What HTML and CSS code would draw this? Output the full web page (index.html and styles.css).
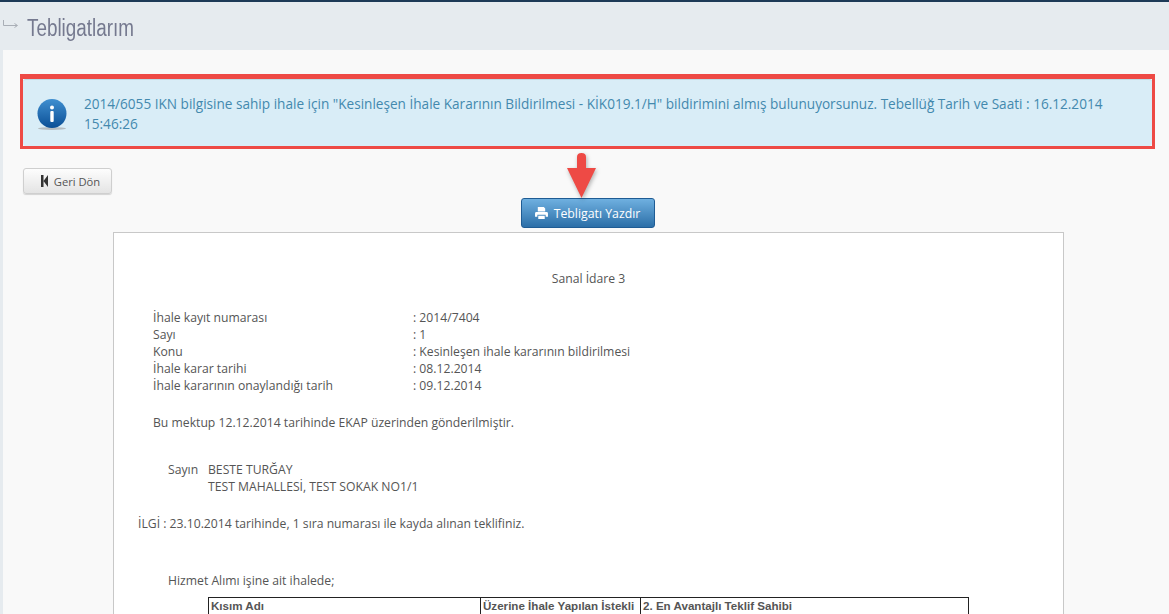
FILE: index.html
```html
<!DOCTYPE html>
<html lang="tr">
<head>
    <meta charset="UTF-8">
    <meta name="viewport" content="width=device-width, initial-scale=1.0">
    <title>Tebligatlarım</title>
    <link rel="stylesheet" href="styles.css">
</head>
<body>

<div class="page-header">
    <svg class="header-icon" width="16" height="9" viewBox="0 0 16 9">
        <path d="M0.5 0V5.5H14M11.5 3.5L14.5 5.5L11.5 7.5" fill="none" stroke="#a9aeb6" stroke-width="1"/>
    </svg>
    <h1>Tebligatlarım</h1>
</div>

<div class="content">
    <div class="alert-info">
        <svg class="alert-icon" width="32" height="32" viewBox="0 0 32 32">
            <defs>
                <linearGradient id="infoGrad" x1="0" y1="0" x2="0" y2="1">
                    <stop offset="0" stop-color="#3f8fd0"/>
                    <stop offset="1" stop-color="#0b4f96"/>
                </linearGradient>
            </defs>
            <ellipse cx="15" cy="29.5" rx="14" ry="1.5" fill="#b5bcc0"/>
            <circle cx="15" cy="14.5" r="14.5" fill="url(#infoGrad)"/>
            <circle cx="15" cy="8.5" r="2" fill="#fff"/>
            <rect x="13.3" y="12" width="3.4" height="11" rx="1" fill="#fff"/>
        </svg>
        <p>2014/6055 IKN bilgisine sahip ihale için "Kesinleşen İhale Kararının Bildirilmesi - KİK019.1/H" bildirimini almış bulunuyorsunuz. Tebellüğ Tarih ve Saati : 16.12.2014 15:46:26</p>
        <!-- red highlight around the alert -->
        <div class="highlight-box"></div>
    </div>

    <div class="back-row">
        <button class="btn btn-back">
            <svg width="7" height="12" viewBox="0 0 7 12"><path d="M0 0H2.5V12H0ZM2.5 6L7 0V12Z" fill="#333"/></svg>
            Geri Dön
        </button>
    </div>

    <div class="print-row">
        <button class="btn btn-print">
            <svg width="13" height="12" viewBox="0 0 14 13"><path d="M3 0H9.5L11 1.5V5H3ZM1.5 5.5H12.5Q14 5.5 14 7V10.5H11.5V8.5H2.5V10.5H0V7Q0 5.5 1.5 5.5ZM3.5 9.5H10.5V13H3.5Z" fill="#fff"/></svg>
            Tebligatı Yazdır
        </button>
        <!-- red arrow pointing at the print button -->
        <svg class="arrow" width="36" height="50" viewBox="0 0 36 50">
            <path d="M13 6Q13 2 17.5 2Q22 2 22 6V17H32L17.5 47L3 17H13Z" fill="#ee4a45"/>
        </svg>
    </div>

    <div class="document">
        <p class="doc-title">Sanal İdare 3</p>

        <table class="meta">
            <tr><td class="meta-label">İhale kayıt numarası</td><td>: 2014/7404</td></tr>
            <tr><td class="meta-label">Sayı</td><td>: 1</td></tr>
            <tr><td class="meta-label">Konu</td><td>: Kesinleşen ihale kararının bildirilmesi</td></tr>
            <tr><td class="meta-label">İhale karar tarihi</td><td>: 08.12.2014</td></tr>
            <tr><td class="meta-label">İhale kararının onaylandığı tarih</td><td>: 09.12.2014</td></tr>
        </table>

        <p class="sent-note">Bu mektup 12.12.2014 tarihinde EKAP üzerinden gönderilmiştir.</p>

        <div class="addressee">
            <span class="addressee-label">Sayın</span>
            <div>BESTE TURĞAY<br>TEST MAHALLESİ, TEST SOKAK NO1/1</div>
        </div>

        <p class="ref">İLGİ : 23.10.2014 tarihinde, 1 sıra numarası ile kayda alınan teklifiniz.</p>

        <p class="intro">Hizmet Alımı işine ait ihalede;</p>

        <table class="result">
            <tr>
                <th class="col-part">Kısım Adı</th>
                <th class="col-winner">Üzerine İhale Yapılan İstekli</th>
                <th>2. En Avantajlı Teklif Sahibi</th>
            </tr>
        </table>
    </div>
</div>

</body>
</html>
```

FILE: styles.css
```css
html, body {
    height: 614px;
    overflow: hidden;
}
body {
    margin: 0;
    font-family: "Open Sans", sans-serif;
    font-size: 12.2px;
    color: #555;
    background-color: #e6ebef;
    border-top: 2px solid #1d3a57;
    box-sizing: border-box;
}
.page-header {
    height: 48px;
    display: flex;
    align-items: center;
    padding-left: 3px;
}
.header-icon {
    margin-right: 8px;
    margin-top: -4px;
}
h1 {
    margin: 4px 0 0;
    font-family: "Liberation Sans", sans-serif;
    font-size: 23px;
    font-weight: normal;
    color: #75798f;
    transform: scaleX(0.82); /* the original heading face is a narrow one */
    transform-origin: left center;
}
.content {
    margin-left: 3px;
    height: 564px;
    padding: 29px 17px 0 20px;
    background-color: #f9f9f9;
    box-sizing: border-box;
}
.alert-info {
    position: relative;
    display: flex;
    align-items: center;
    height: 67px;
    padding: 1px 20px 0 14px;
    background-color: #d9edf7;
    border-top: 1px solid #bcdde8;
    border-radius: 3px;
    box-sizing: border-box;
    color: #4389ae;
    font-size: 13.6px;
    line-height: 20px;
}
.alert-info p {
    margin: 0 0 0 15px;
}
.alert-icon {
    flex-shrink: 0;
    margin-top: 2px;
}
.highlight-box {
    position: absolute;
    top: -6px;
    left: -3px;
    right: -3px;
    bottom: -3px;
    border: 3px solid #ee4a45;
    border-top-width: 5px;
}
.btn {
    display: flex;
    align-items: center;
    justify-content: center;
    gap: 6px;
    font-family: "Open Sans", sans-serif;
    border-radius: 3px;
    padding: 0;
}
.back-row {
    margin-top: 22px;
}
.btn-back {
    width: 89px;
    height: 26px;
    padding-left: 6px;
    font-size: 11.2px;
    color: #555;
    background: linear-gradient(#fdfdfd, #e4e4e4);
    border: 1px solid #cfcfcf;
    box-shadow: 0 1px 1px rgba(0, 0, 0, 0.15);
}
.print-row {
    position: relative;
    display: flex;
    justify-content: center;
    margin: 4px 0 4px;
}
.btn-print {
    width: 134px;
    height: 30px;
    font-size: 12.3px;
    color: #fff;
    background: linear-gradient(#6fb0e0, #2c6fa8);
    border: 1px solid #1f5c94;
}
.arrow {
    position: absolute;
    top: -47px;
    left: 541px;
    filter: drop-shadow(1px 2px 2px rgba(0, 0, 0, 0.3));
}
.document {
    width: 925px;
    height: 400px;
    margin-left: 90px;
    padding: 37px 0 0 24px;
    background-color: #fff;
    border: 1px solid #c8c8c8;
    line-height: 17px;
}
.document p {
    margin: 0;
}
.doc-title {
    text-align: center;
    padding-right: 24px;
}
.meta {
    margin: 22px 0 0 15px;
    border-collapse: collapse;
    font-size: 12.2px;
}
.meta td {
    padding: 0;
}
.meta-label {
    width: 260px;
}
.document .sent-note {
    margin: 20px 0 0 15px;
}
.addressee {
    display: flex;
    margin: 30px 0 0 30px;
}
.addressee-label {
    width: 40px;
}
.document .ref {
    margin-top: 20px;
}
.document .intro {
    margin: 40px 0 0 30px;
}
.result {
    width: 761px;
    margin: 8px 0 0 70px;
    border-collapse: collapse;
    table-layout: fixed;
    font-family: "Liberation Sans", Arial, sans-serif;
    font-size: 11.6px;
    line-height: 14px;
}
.result th {
    padding: 1px 2px;
    text-align: left;
    white-space: nowrap;
    border: 1px solid #222;
}
.col-part {
    width: 267px;
}
.col-winner {
    width: 155px;
}
```
